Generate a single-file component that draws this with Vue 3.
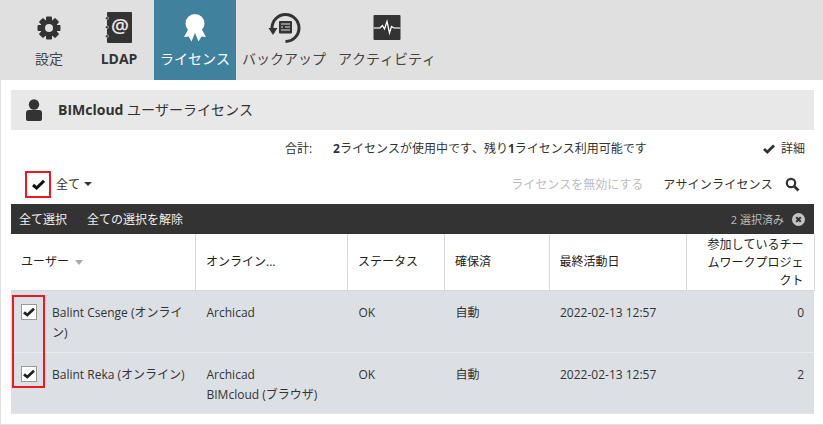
<script setup>
const teeth = [0, 45, 90, 135]
const rows = [
  { name: 'Balint Csenge (オンライン)', apps: ['Archicad'], status: 'OK', reserved: '自動', date: '2022-02-13 12:57', count: 0 },
  { name: 'Balint Reka (オンライン)', apps: ['Archicad', 'BIMcloud (ブラウザ)'], status: 'OK', reserved: '自動', date: '2022-02-13 12:57', count: 2 }
]
</script>

<template>
  <div class="page">
    <nav class="nav">
      <div class="tab">
        <svg class="ticon" width="30" height="30" viewBox="0 0 30 30">
          <rect v-for="a in teeth" :key="a" x="12" y="3.5" width="6" height="23" rx="1" fill="#333" :transform="`rotate(${a} 15 15)`" />
          <circle cx="15" cy="15" r="8.6" fill="#333" />
          <circle cx="15" cy="15" r="4" fill="#e0e0e0" />
        </svg>
        <span>設定</span>
      </div>
      <div class="tab ldap">
        <svg class="ticon" width="30" height="32" viewBox="0 0 30 32">
          <rect x="3" y="0" width="25" height="31" rx="1" fill="#333" />
          <rect x="1.5" y="5" width="3" height="2.4" rx="1" fill="#333" stroke="#e0e0e0" stroke-width=".6" />
          <rect x="1.5" y="14" width="3" height="2.4" rx="1" fill="#333" stroke="#e0e0e0" stroke-width=".6" />
          <rect x="1.5" y="23" width="3" height="2.4" rx="1" fill="#333" stroke="#e0e0e0" stroke-width=".6" />
          <text x="16" y="21" text-anchor="middle" font-size="20" font-weight="600" fill="#e6e6e6" font-family="'Open Sans',sans-serif">@</text>
        </svg>
        <span>LDAP</span>
      </div>
      <div class="tab active">
        <svg class="ticon" width="30" height="32" viewBox="0 0 30 32">
          <path d="M9 16 L4 25 L8.5 24.5 L11.5 29.5 L15 21 L18.5 29.5 L21.5 24.5 L26 25 L21 16 Z" fill="#fff" />
          <circle cx="15" cy="11.5" r="9.5" fill="#fff" />
        </svg>
        <span>ライセンス</span>
      </div>
      <div class="tab">
        <svg class="ticon" width="34" height="32" viewBox="0 0 34 32">
          <path d="M5 16 A13.5 13.5 0 1 1 18.5 29.5" fill="none" stroke="#333" stroke-width="3" />
          <path d="M1.5 16 H10.5 L6 23 Z" fill="#333" />
          <rect x="12" y="9" width="13" height="12.5" rx="1" fill="#333" />
          <path d="M14 12 H23 M14 15 H16 M18 15 H23 M14 18 H23" stroke="#e0e0e0" stroke-width="1" />
        </svg>
        <span>バックアップ</span>
      </div>
      <div class="tab">
        <svg class="ticon" width="30" height="32" viewBox="0 0 30 32">
          <rect x="1.5" y="3" width="27" height="25" rx="1" fill="#333" />
          <path d="M1.5 16 H8" stroke="#ccc" stroke-width="1.5" />
          <path d="M22 16 H28.5" stroke="#ccc" stroke-width="1.5" />
          <path d="M8 16 L10.5 13.5 L12.5 17 L15 9.5 L17.5 21 L19.5 14.5 L22 16" fill="none" stroke="#fff" stroke-width="1.3" />
        </svg>
        <span>アクティビティ</span>
      </div>
    </nav>

    <main class="main">
      <header class="title">
        <svg width="18" height="24" viewBox="0 0 18 24">
          <circle cx="9" cy="6.5" r="5.2" fill="#333" />
          <path d="M1 15 Q1 12 4 12 H14 Q17 12 17 15 V21 Q17 23 15 23 H3 Q1 23 1 21 Z" fill="#333" />
        </svg>
        <h1><b>BIMcloud</b> ユーザーライセンス</h1>
      </header>

      <div class="summary">
        <span class="sum-label">合計:</span>
        <span class="sum-text"><b>2</b>ライセンスが使用中です、残り<b>1</b>ライセンス利用可能です</span>
        <span class="details">
          <svg width="12" height="10" viewBox="0 0 12 10"><path d="M1 5 L4.3 8 L11 1.5" fill="none" stroke="#333" stroke-width="2.8" /></svg>
          詳細
        </span>
      </div>

      <div class="toolbar">
        <div class="select-all">
          <span class="redbox">
            <svg width="13" height="11" viewBox="0 0 13 11"><path d="M1 6 L4.6 9 L12 1.8" fill="none" stroke="#111" stroke-width="3" /></svg>
          </span>
          <span class="all-label">全て</span>
          <i class="caret"></i>
        </div>
        <span class="disabled">ライセンスを無効にする</span>
        <span class="assign">アサインライセンス</span>
        <svg class="search" width="15" height="15" viewBox="0 0 15 15">
          <circle cx="6" cy="6" r="4.2" fill="none" stroke="#333" stroke-width="2.2" />
          <path d="M9.2 9.2 L13.5 13.5" stroke="#333" stroke-width="2.8" />
        </svg>
      </div>

      <div class="bar">
        <span class="bar-a">全て選択</span>
        <span class="bar-b">全ての選択を解除</span>
        <span class="bar-count">2 選択済み</span>
        <svg width="13" height="13" viewBox="0 0 13 13">
          <circle cx="6.5" cy="6.5" r="6.5" fill="#c4c4c4" />
          <path d="M4.2 4.2 L8.8 8.8 M8.8 4.2 L4.2 8.8" stroke="#333" stroke-width="2" />
        </svg>
      </div>

      <table class="grid">
        <colgroup>
          <col class="c1" /><col class="c2" /><col class="c3" /><col class="c4" /><col class="c5" /><col class="c6" />
        </colgroup>
        <thead>
          <tr>
            <th class="user-th">ユーザー <i class="sort"></i></th>
            <th>オンライン...</th>
            <th>ステータス</th>
            <th>確保済</th>
            <th>最終活動日</th>
            <th class="num"><div class="th-lines">参加しているチームワークプロジェクト</div></th>
          </tr>
        </thead>
        <tbody>
          <tr v-for="r in rows" :key="r.name">
            <td class="user-td">
              <div class="user-cell">
                <span class="cb">
                  <svg width="12" height="10" viewBox="0 0 12 10"><path d="M1 5.3 L4.3 8 L11 1.8" fill="none" stroke="#222" stroke-width="2.8" /></svg>
                </span>
                <span class="uname">{{ r.name }}</span>
              </div>
            </td>
            <td><div v-for="a in r.apps" :key="a">{{ a }}</div></td>
            <td>{{ r.status }}</td>
            <td>{{ r.reserved }}</td>
            <td>{{ r.date }}</td>
            <td class="num">{{ r.count }}</td>
          </tr>
        </tbody>
      </table>
      <div class="redcol"></div>
    </main>
  </div>
</template>

<style>
html, body { margin: 0; background: #fff; }
</style>

<style scoped>
.page {
  width: 823px;
  height: 425px;
  overflow: hidden;
  box-sizing: border-box;
  background: #e0e0e0;
  font-family: "Open Sans", "Noto Sans CJK JP", sans-serif;
  font-size: 12px;
  color: #333;
  font-kerning: none;
}
.nav {
  display: flex;
  height: 80px;
  padding-left: 14px;
}
.tab {
  position: relative;
  min-width: 70px;
  box-sizing: border-box;
  padding: 0 6px;
  display: flex;
  flex-direction: column;
  align-items: center;
  font-size: 14px;
  line-height: 20px;
  color: #444;
}
.ticon { margin-top: 12px; height: 32px; flex: none; overflow: visible; }
.tab span { margin-top: 5px; white-space: nowrap; }
.ldap span { font-weight: 700; font-size: 14px; color: #333; }
.active { background: #40819e; color: #fff; }
.active::after {
  content: "";
  position: absolute;
  left: 50%;
  top: 100%;
  margin-left: -6px;
  border: 6px solid transparent;
  border-bottom: 0;
  border-top-color: #40819e;
}
.main {
  position: relative;
  height: 344px;
  box-sizing: border-box;
  margin-left: 1px;
  background: #fff;
  padding: 10px 9px 0 10px;
}
.title {
  height: 40px;
  background: #e8e8e8;
  display: flex;
  align-items: center;
  padding-left: 14px;
  gap: 15px;
}
h1 { margin: 0; font-size: 14px; font-weight: 400; line-height: 20px; color: #333; }
.summary {
  display: flex;
  align-items: center;
  height: 38px;
  line-height: 18px;
}
.sum-label { margin-left: 274px; width: 48px; }
.details { margin-left: auto; margin-right: 9px; display: flex; align-items: center; gap: 6px; }
.toolbar {
  display: flex;
  align-items: center;
  height: 36px;
  padding-bottom: 4px;
  box-sizing: border-box;
}
.select-all { display: flex; align-items: center; margin-left: 14px; margin-right: auto; }
.redbox {
  width: 26px;
  height: 27px;
  box-sizing: border-box;
  border: 2px solid #f01820;
  display: flex;
  align-items: center;
  justify-content: center;
}
.all-label { margin-left: 5px; }
.caret {
  margin-left: 4px;
  border: 4px solid transparent;
  border-bottom: 0;
  border-top: 4px solid #333;
}
.disabled { color: #bdbdbd; margin-right: 20px; }
.assign { margin-right: 12px; letter-spacing: .2px; }
.search { margin-right: 14px; }
.bar {
  height: 30px;
  background: #333;
  color: #eee;
  display: flex;
  align-items: center;
  padding: 0 9px 0 8px;
}
.bar-a { margin-right: 20px; }
.bar-count { margin-left: auto; margin-right: 8px; color: #bbb; font-size: 11px; }
.grid {
  width: 803px;
  table-layout: fixed;
  border-collapse: collapse;
}
.c1 { width: 184.5px; }
.c2 { width: 152px; }
.c3 { width: 97px; }
.c4 { width: 104.5px; }
.c5 { width: 137px; }
.c6 { width: 128px; }
th {
  height: 56px;
  padding: 0 10px;
  font-weight: 400;
  text-align: left;
  line-height: 18px;
  color: #222;
  border-right: 1px solid #d8d8d8;
  border-bottom: 1px solid #d8d8d8;
}
.th-lines { margin: 1px 0 -1px; }
td {
  padding: 12px 10px 8.5px 11px;
  background: #dce0e4;
  line-height: 20px;
  vertical-align: top;
  border-bottom: 1px solid #e9ecef;
}
tbody tr:last-child td { border-bottom: 1px solid #e4e4e4; }
.num { text-align: right; }
.sort {
  display: inline-block;
  margin-left: 3px;
  vertical-align: middle;
  border: 4px solid transparent;
  border-bottom: 0;
  border-top: 5px solid #aaa;
}
.user-td { padding-left: 10px; padding-right: 6px; }
.user-cell { display: flex; align-items: flex-start; gap: 15px; }
.cb {
  flex: none;
  width: 16px;
  height: 16px;
  margin-top: 1px;
  box-sizing: border-box;
  background: #fff;
  border: 1px solid #999;
  display: flex;
  align-items: center;
  justify-content: center;
}
.redcol {
  position: absolute;
  left: 11px;
  top: 215px;
  width: 33px;
  height: 93px;
  box-sizing: border-box;
  border: 2px solid #f01820;
}
</style>
